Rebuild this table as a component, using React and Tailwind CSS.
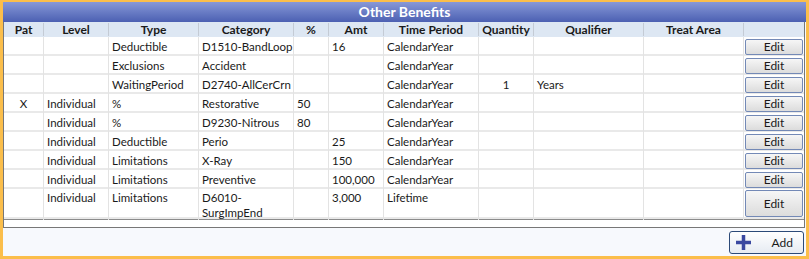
import React from "react";

const COLS = "grid grid-cols-[40px_65px_90px_95px_35px_55px_95px_55px_110px_100px_60px]";

const headers = ["Pat", "Level", "Type", "Category", "%", "Amt", "Time Period", "Quantity", "Qualifier", "Treat Area", ""];

const rows = [
  { type: "Deductible", cat: "D1510-BandLoop", amt: "16", tp: "CalendarYear" },
  { type: "Exclusions", cat: "Accident", tp: "CalendarYear" },
  { type: "WaitingPeriod", cat: "D2740-AllCerCrn", tp: "CalendarYear", qty: "1", qual: "Years" },
  { pat: "X", level: "Individual", type: "%", cat: "Restorative", pct: "50", tp: "CalendarYear" },
  { level: "Individual", type: "%", cat: "D9230-Nitrous", pct: "80", tp: "CalendarYear" },
  { level: "Individual", type: "Deductible", cat: "Perio", amt: "25", tp: "CalendarYear" },
  { level: "Individual", type: "Limitations", cat: "X-Ray", amt: "150", tp: "CalendarYear" },
  { level: "Individual", type: "Limitations", cat: "Preventive", amt: "100,000", tp: "CalendarYear" },
  { level: "Individual", type: "Limitations", cat: ["D6010-", "SurgImpEnd"], amt: "3,000", tp: "Lifetime", tall: true },
];

const Cell = ({ children, center, tall }) => (
  <div
    className={`border-r border-[#e3e3e3] px-[3px] whitespace-nowrap ${
      tall ? "leading-[15px] pt-[1px]" : "leading-[15px] pt-[2px] overflow-hidden"
    } ${center ? "text-center" : ""}`}
  >
    {children}
  </div>
);

const EditButton = ({ tall }) => (
  <div className="px-[1px] py-[1px] h-full">
    <button
      className={`w-[58px] ${tall ? "h-[27px]" : "h-[16px]"} border border-[#7389b6] rounded-[2px] bg-gradient-to-b from-[#f6f6f6] to-[#dcdcdc] text-[12px] leading-[14px] text-[#1a1a1a]`}
    >
      Edit
    </button>
  </div>
);

const BenefitRow = ({ row }) => {
  const t = row.tall;
  return (
    <div className={`${COLS} ${t ? "h-[30px]" : "h-[19px]"} border-b-2 border-[#e9e9e9]`}>
      <Cell tall={t} center>{row.pat}</Cell>
      <Cell tall={t}>{row.level}</Cell>
      <Cell tall={t}>{row.type}</Cell>
      <Cell tall={t}>
        {Array.isArray(row.cat) ? (
          <>
            {row.cat[0]}
            <br />
            {row.cat[1]}
          </>
        ) : (
          row.cat
        )}
      </Cell>
      <Cell tall={t}>{row.pct}</Cell>
      <Cell tall={t}>{row.amt}</Cell>
      <Cell tall={t}>{row.tp}</Cell>
      <Cell tall={t} center>{row.qty}</Cell>
      <Cell tall={t}>{row.qual}</Cell>
      <Cell tall={t}>{row.area}</Cell>
      <EditButton tall={t} />
    </div>
  );
};

const App = () => {
  return (
    <div
      className="w-[809px] h-[259px] bg-[#f7f9fd] border-l-[3px] border-r-[3px] border-t-2 border-b-[3px] border-[#fbbe4b] flex flex-col text-[11.5px] text-[#1a1a1a]"
      style={{ fontFamily: "Lato, 'Open Sans', sans-serif" }}
    >
      {/* title */}
      <div className="h-[20px] bg-gradient-to-b from-[#8898d7] to-[#4c60b2] text-white font-bold text-[14px] leading-[20px] text-center">
        Other Benefits
      </div>

      {/* grid */}
      <div className="bg-white border-l border-r border-b border-[#777] mr-[1px]">
        <div className={`${COLS} h-[15px] bg-[#dde7f3] font-bold text-[12px] leading-[15px]`}>
          {headers.map((h, i) => (
            <div key={i} className="text-center border-r border-[#c4cbd5] last:border-r-0 my-[1px] leading-[13px] whitespace-nowrap">
              {h}
            </div>
          ))}
        </div>
        {rows.map((r, i) => (
          <BenefitRow key={i} row={r} />
        ))}
        <div className="h-[8px] border-t border-[#8c8c8c]" />
      </div>

      {/* footer */}
      <div className="flex justify-end pt-[3px] pr-[2px]">
        <button className="w-[75px] h-[23px] border border-[#2c4a78] rounded-[3px] bg-gradient-to-b from-white to-[#e6ebf2] flex items-center pl-[5px] pr-[10px]">
          <svg width="17" height="17" viewBox="0 0 17 17">
            <path d="M8.5 1 V16 M1 8.5 H16" stroke="#3a48a0" strokeWidth="3.5" />
          </svg>
          <span className="ml-auto text-[12px] text-[#1a1a1a]">Add</span>
        </button>
      </div>
    </div>
  );
};

export default App;
